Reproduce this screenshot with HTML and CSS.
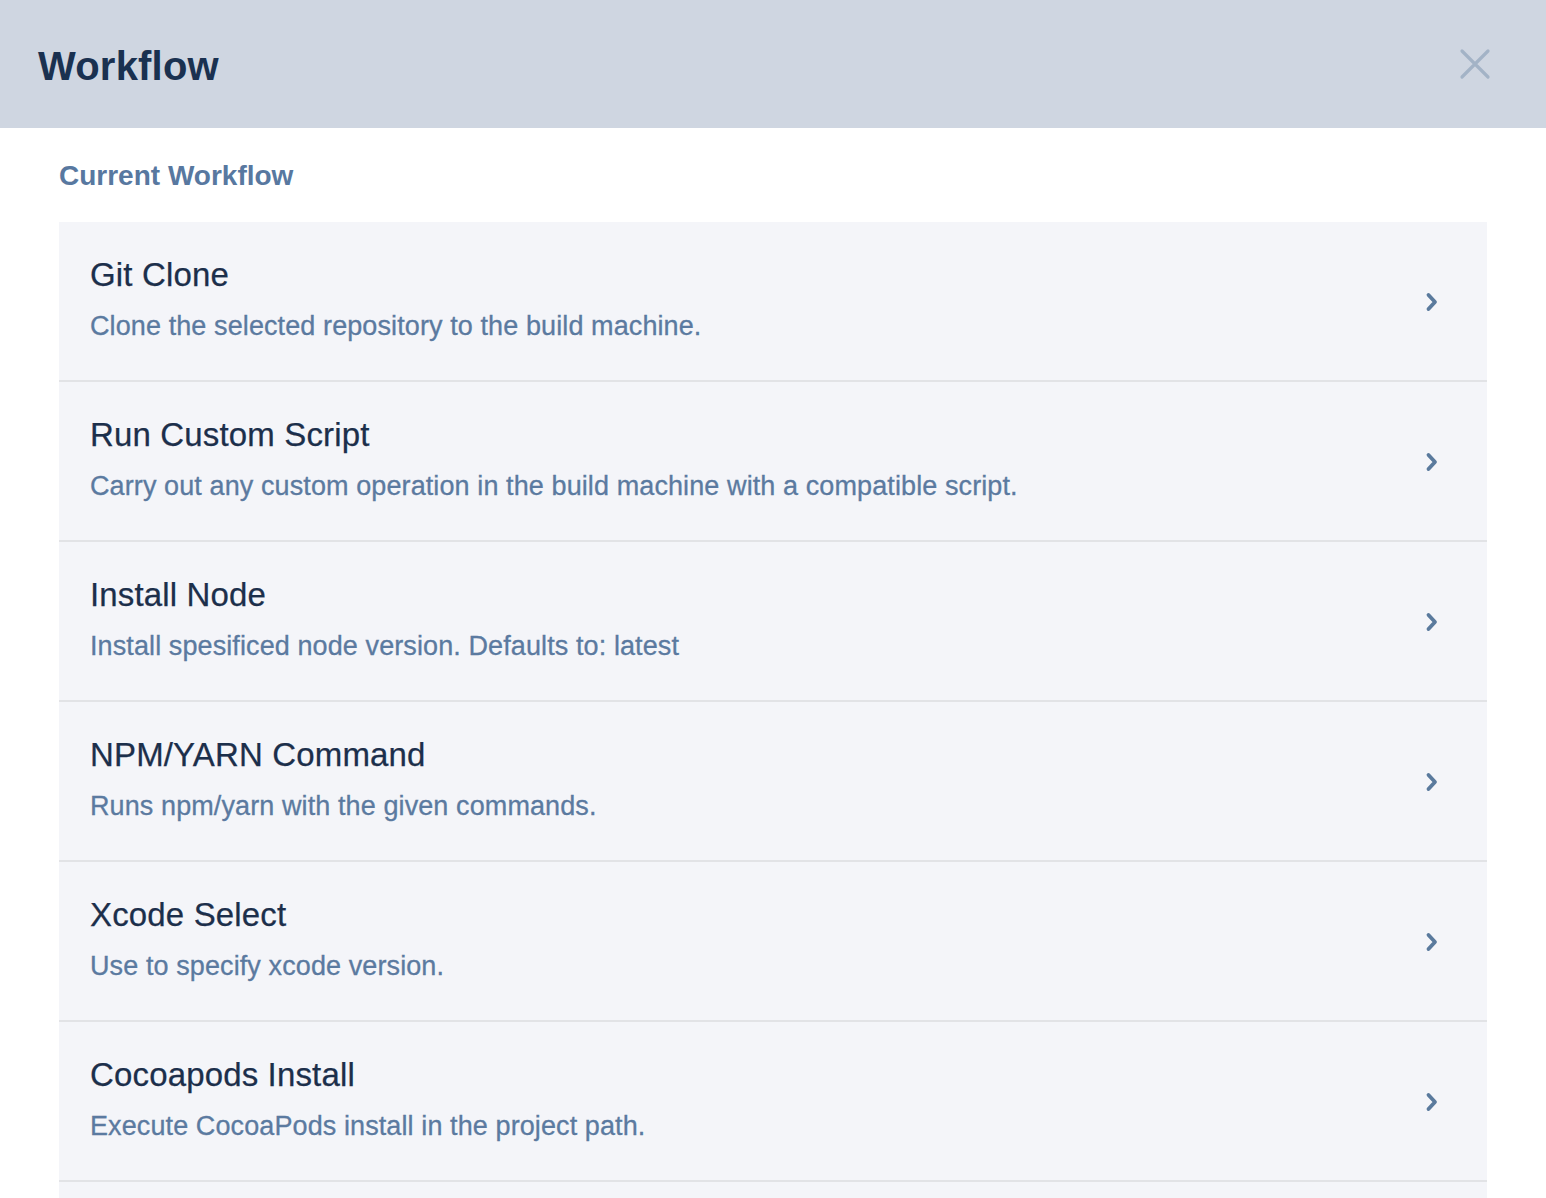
FILE: index.html
```html
<!DOCTYPE html>
<html>
<head>
<meta charset="utf-8">
<link rel="stylesheet" href="styles.css">
</head>
<body>
<header class="header">
  <h1 class="title">Workflow</h1>
  <button class="close" aria-label="Close">
    <svg width="32" height="32" viewBox="0 0 32 32"><path d="M3 3 L29 29 M29 3 L3 29" stroke="#a3b3c6" stroke-width="3.2" stroke-linecap="round" fill="none"/></svg>
  </button>
</header>
<main class="content">
  <h2 class="section">Current Workflow</h2>
  <ul class="list">
    <li class="item"><div class="text"><div class="name">Git Clone</div><div class="desc">Clone the selected repository to the build machine.</div></div><svg class="chev" width="14" height="20" viewBox="0 0 14 20"><path d="M3.5 3 L10 10 L3.5 17" stroke="#5a7a9d" stroke-width="3.8" fill="none" stroke-linecap="round" stroke-linejoin="round"/></svg></li>
    <li class="item"><div class="text"><div class="name">Run Custom Script</div><div class="desc">Carry out any custom operation in the build machine with a compatible script.</div></div><svg class="chev" width="14" height="20" viewBox="0 0 14 20"><path d="M3.5 3 L10 10 L3.5 17" stroke="#5a7a9d" stroke-width="3.8" fill="none" stroke-linecap="round" stroke-linejoin="round"/></svg></li>
    <li class="item"><div class="text"><div class="name">Install Node</div><div class="desc">Install spesificed node version. Defaults to: latest</div></div><svg class="chev" width="14" height="20" viewBox="0 0 14 20"><path d="M3.5 3 L10 10 L3.5 17" stroke="#5a7a9d" stroke-width="3.8" fill="none" stroke-linecap="round" stroke-linejoin="round"/></svg></li>
    <li class="item"><div class="text"><div class="name">NPM/YARN Command</div><div class="desc">Runs npm/yarn with the given commands.</div></div><svg class="chev" width="14" height="20" viewBox="0 0 14 20"><path d="M3.5 3 L10 10 L3.5 17" stroke="#5a7a9d" stroke-width="3.8" fill="none" stroke-linecap="round" stroke-linejoin="round"/></svg></li>
    <li class="item"><div class="text"><div class="name">Xcode Select</div><div class="desc">Use to specify xcode version.</div></div><svg class="chev" width="14" height="20" viewBox="0 0 14 20"><path d="M3.5 3 L10 10 L3.5 17" stroke="#5a7a9d" stroke-width="3.8" fill="none" stroke-linecap="round" stroke-linejoin="round"/></svg></li>
    <li class="item"><div class="text"><div class="name">Cocoapods Install</div><div class="desc">Execute CocoaPods install in the project path.</div></div><svg class="chev" width="14" height="20" viewBox="0 0 14 20"><path d="M3.5 3 L10 10 L3.5 17" stroke="#5a7a9d" stroke-width="3.8" fill="none" stroke-linecap="round" stroke-linejoin="round"/></svg></li>
    <li class="item item-last"></li>
  </ul>
</main>
</body>
</html>
```

FILE: styles.css
```css
html, body {
  margin: 0;
  padding: 0;
  background: #ffffff;
  font-family: "Liberation Sans", Arial, sans-serif;
  overflow: hidden;
  height: 1198px;
}
.header {
  height: 128px;
  background: #cfd6e1;
  display: flex;
  align-items: center;
  justify-content: space-between;
  padding: 0 55px 0 38px;
  box-sizing: border-box;
}
.title {
  margin: 0;
  font-size: 40px;
  font-weight: 700;
  color: #1a3150;
  letter-spacing: 0.2px;
  padding-top: 4px;
}
.close {
  border: 0;
  background: none;
  padding: 0;
  width: 32px;
  height: 32px;
}
.close svg { display: block; }
.content {
  padding: 0 59px;
}
.section {
  margin: 0;
  height: 94px;
  box-sizing: border-box;
  padding-top: 33px;
  font-size: 28px;
  font-weight: 700;
  color: #5878a0;
  line-height: 30px;
}
.list {
  list-style: none;
  margin: 0;
  padding: 0;
}
.item {
  height: 160px;
  box-sizing: border-box;
  background: #f4f5f9;
  border-bottom: 2px solid #e2e3e6;
  display: flex;
  align-items: center;
  justify-content: space-between;
  padding: 0 48px 0 31px;
}
.item-last {
  height: 16px;
  border-bottom: 0;
}
.text {
  padding-bottom: 5px;
}
.name {
  font-size: 33px;
  color: #1c2f4b;
  line-height: 40px;
  letter-spacing: 0.15px;
  -webkit-text-stroke: 0.25px currentColor;
}
.desc {
  font-size: 27px;
  color: #5b7aa0;
  line-height: 32px;
  margin-top: 15px;
  letter-spacing: 0.1px;
  -webkit-text-stroke: 0.3px currentColor;
}
.chev { display: block; margin-top: 1px; }
```
